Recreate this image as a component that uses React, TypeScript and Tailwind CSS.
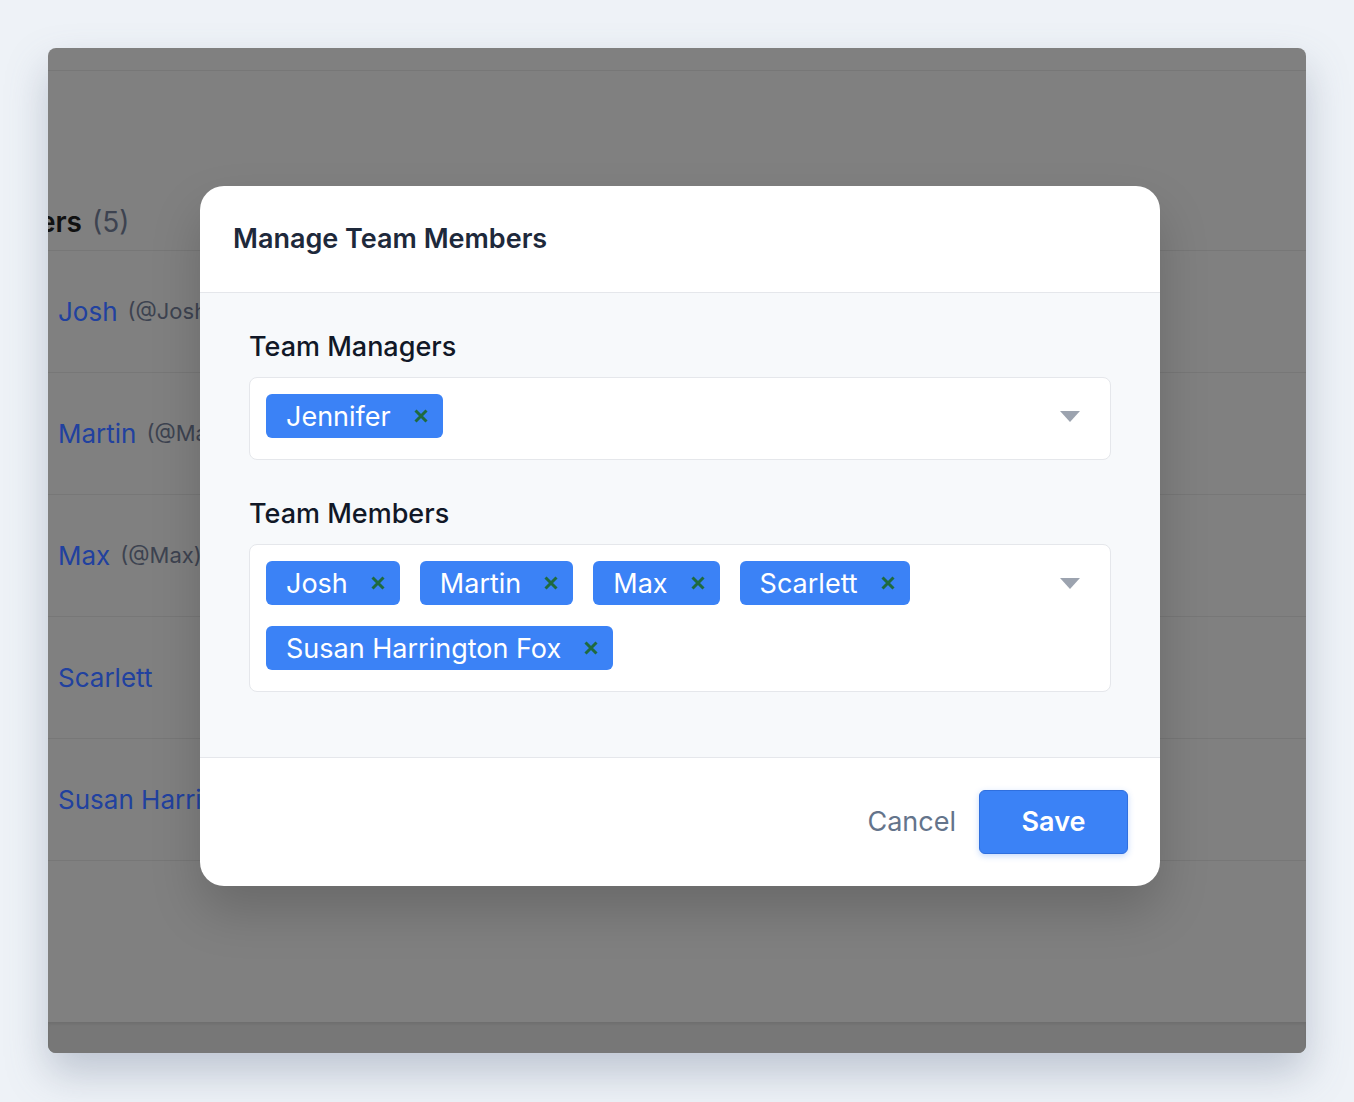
import { useState } from "react"

type Chip = { id: string; name: string }

const listRows = [
  { name: "Josh", handle: "(@Josh)" },
  { name: "Martin", handle: "(@Martin)" },
  { name: "Max", handle: "(@Max)" },
  { name: "Scarlett", handle: "" },
  { name: "Susan Harrington Fox", handle: "(@Susan)" },
]

function XIcon() {
  return (
    <svg viewBox="0 0 14 14" className="w-[14px] h-[14px]" fill="none">
      <path d="M1.5 1.5l11 11M12.5 1.5l-11 11" stroke="#1f6a3f" strokeWidth={3} strokeLinecap="butt" />
    </svg>
  )
}

function Caret() {
  return (
    <svg viewBox="0 0 20 11" className="w-5 h-[11px]">
      <path d="M0 0h20L10 11z" fill="#9ca3af" />
    </svg>
  )
}

function Tag({ chip, onRemove }: { chip: Chip; onRemove: () => void }) {
  return (
    <span className="flex items-center h-11 pl-5 pr-[15px] bg-[#3b82f6] rounded-md text-white text-[27px] leading-none">
      {chip.name}
      <button onClick={onRemove} className="ml-[23px] flex items-center">
        <XIcon />
      </button>
    </span>
  )
}

function MultiSelect({ label, initial }: { label: string; initial: Chip[] }) {
  const [chips, setChips] = useState(initial)
  return (
    <div>
      <div className="text-[27px] leading-8 text-[#111827] font-medium mb-[14px]">{label}</div>
      <div className="flex items-start bg-white border border-[#e5e7eb] rounded-lg pl-4 pr-[30px] pt-4 pb-[21px]">
        <div className="flex-1 flex flex-wrap gap-x-5 gap-y-[21px]">
          {chips.map((c) => (
            <Tag key={c.id} chip={c} onRemove={() => setChips(chips.filter((x) => x.id !== c.id))} />
          ))}
        </div>
        <div className="pt-[17px]">
          <Caret />
        </div>
      </div>
    </div>
  )
}

export default function App() {
  return (
    <div
      className="min-h-screen bg-[#eef2f7] p-12"
      style={{ fontFamily: "Inter, 'Noto Sans', sans-serif" }}
    >
      <div className="relative h-[1005px] rounded-lg overflow-hidden bg-[#808080] shadow-[0_20px_40px_rgba(100,116,139,0.35)] flex flex-col">
        <div className="h-[23px] border-b border-[#777777]" />
        <div className="flex-1">
          <div className="h-[180px] border-b border-[#777777] flex items-end pb-[7px]">
            <div className="w-[34px] overflow-hidden flex justify-end whitespace-nowrap">
              <span className="text-[28px] font-semibold text-[#111]">Team Members</span>
            </div>
            <span className="text-[28px] text-[#3d4350] ml-[10px]">(5)</span>
          </div>
          {listRows.map((r) => (
            <div key={r.name} className="h-[122px] border-b border-[#777777] flex items-center pl-[10px] whitespace-nowrap">
              <span className="text-[26px] text-[#21419f]">{r.name}</span>
              {r.handle && <span className="ml-[10px] text-[22px] text-[#3d4350]">{r.handle}</span>}
            </div>
          ))}
        </div>
        <div className="h-[31px] bg-[#777777] shadow-[inset_0_2px_3px_rgba(0,0,0,0.08)]" />

        <div className="absolute left-[152px] top-[138px] w-[960px] bg-white rounded-3xl overflow-hidden shadow-[0_25px_50px_rgba(0,0,0,0.18)]">
          <div className="h-[107px] flex items-center px-[33px] border-b border-[#e5e7eb]">
            <h2 className="text-[27px] font-semibold text-[#1e293b]">Manage Team Members</h2>
          </div>
          <div className="bg-[#f7f9fb] px-[49px] pt-[38px] pb-[65px] flex flex-col gap-[38px] border-b border-[#e5e7eb]">
            <MultiSelect label="Team Managers" initial={[{ id: "jen", name: "Jennifer" }]} />
            <MultiSelect
              label="Team Members"
              initial={[
                { id: "josh", name: "Josh" },
                { id: "martin", name: "Martin" },
                { id: "max", name: "Max" },
                { id: "scarlett", name: "Scarlett" },
                { id: "susan", name: "Susan Harrington Fox" },
              ]}
            />
          </div>
          <div className="h-[128px] flex items-center justify-end pr-8 gap-[23px]">
            <button className="text-[27px] text-[#64748b]">Cancel</button>
            <button className="w-[149px] h-16 rounded-md bg-[#3b82f6] border border-[#2f6fde] text-white text-[27px] font-semibold shadow-[0_2px_6px_rgba(59,130,246,0.3)]">
              Save
            </button>
          </div>
        </div>
      </div>
    </div>
  )
}
